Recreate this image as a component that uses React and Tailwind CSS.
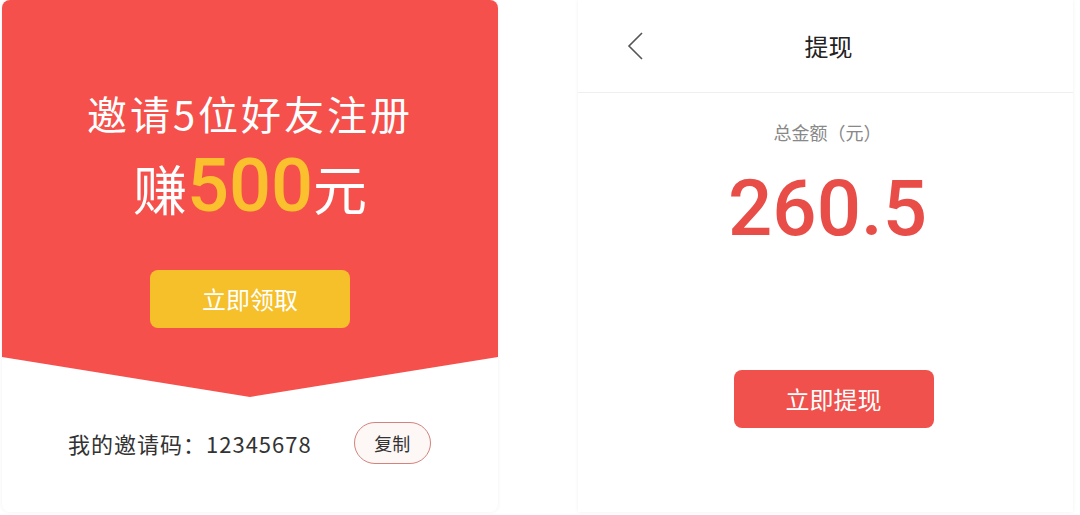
export default function App() {
  const cjk = { fontFamily: '"Noto Sans CJK SC", "Noto Sans", sans-serif' }
  const num = { fontFamily: 'Roboto, "Liberation Sans", sans-serif' }

  return (
    <div className="w-[1080px] h-[515px] bg-white flex items-start overflow-hidden" style={cjk}>
      {/* invite card */}
      <div className="ml-[2px] w-[496px] h-[512px] bg-white rounded-lg shadow-[0_0_4px_rgba(0,0,0,0.06)] flex flex-col">
        <div className="h-[397px] bg-[#f5504b] rounded-t-lg [clip-path:polygon(0_0,100%_0,100%_357px,50%_100%,0_357px)] flex flex-col items-center pt-[86px]">
          <div className="text-[40px] leading-[54px] text-white tracking-[3px]">邀请5位好友注册</div>
          <div className="flex items-baseline mt-[14px] text-white text-[54px] leading-[64px]">
            <span>赚</span>
            <span className="text-[#fbc02d] text-[74px] font-medium leading-[64px]" style={num}>500</span>
            <span>元</span>
          </div>
          <button className="mt-[50px] w-[200px] h-[58px] rounded-lg bg-[#f5c02a] text-white text-[24px]">立即领取</button>
        </div>
        <div className="flex items-center ml-[66px] mt-[25px]">
          <span className="text-[22px] text-[#333] tracking-[1px]">我的邀请码：12345678</span>
          <button className="ml-[42px] w-[77px] h-[42px] rounded-full border-[1.5px] border-[#d4827c] bg-[#fdf7f6] text-[18px] text-[#333]">复制</button>
        </div>
      </div>

      {/* withdraw card */}
      <div className="ml-[80px] w-[495px] h-[512px] bg-white shadow-[0_0_4px_rgba(0,0,0,0.06)] flex flex-col">
        <div className="h-[93px] border-b border-[#efefef] flex items-center relative">
          <svg className="ml-[47px]" width="22" height="32" viewBox="0 0 22 32" fill="none">
            <path d="M17 3 L4 16 L17 29" stroke="#555" strokeWidth="1.6" />
          </svg>
          <div className="absolute inset-x-0 pl-[6px] text-center text-[24px] text-[#222]">提现</div>
        </div>
        <div className="flex flex-col items-center">
          <div className="mt-[26px] ml-[4px] text-[18px] text-[#888]">总金额（元）</div>
          <div className="mt-[21px] ml-[4px] text-[#e84d48] text-[78px] leading-[84px] font-medium" style={num}>260.5</div>
          <button className="mt-[119px] ml-[16px] w-[200px] h-[58px] rounded-lg bg-[#f0514c] text-white text-[24px]">立即提现</button>
        </div>
      </div>
    </div>
  )
}
